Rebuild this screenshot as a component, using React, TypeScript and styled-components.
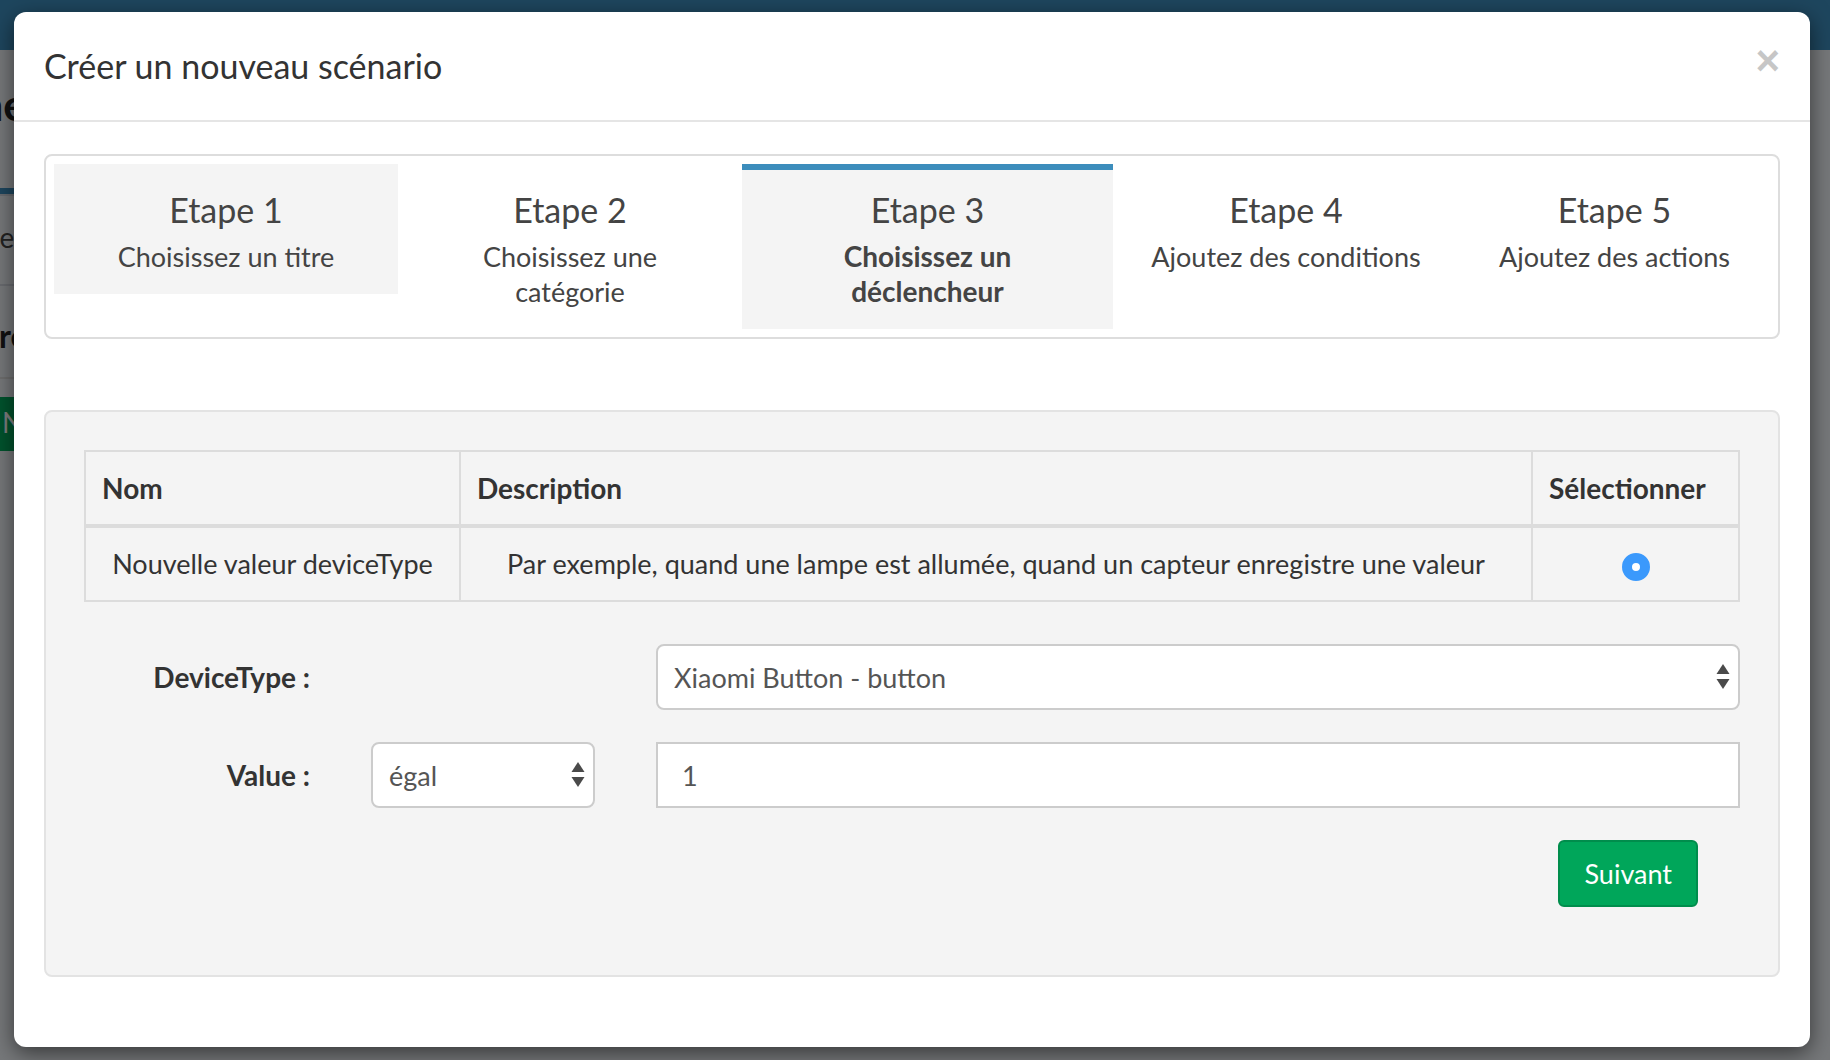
import styled, { createGlobalStyle } from "styled-components"

const GlobalStyle = createGlobalStyle`
    html, body {
        margin: 0;
        padding: 0;
    }
    body {
        width: 1830px;
        height: 1060px;
        overflow: hidden;
        font-family: "Source Sans Pro", Lato, "Open Sans", sans-serif;
        background: #ecf0f5;
        color: #333;
    }
    * {
        box-sizing: border-box;
    }
`

const steps = [
    { title: "Etape 1", text: ["Choisissez un titre"], done: true },
    { title: "Etape 2", text: ["Choisissez une", "catégorie"] },
    { title: "Etape 3", text: ["Choisissez un", "déclencheur"], active: true },
    { title: "Etape 4", text: ["Ajoutez des conditions"] },
    { title: "Etape 5", text: ["Ajoutez des actions"] },
]

const SelectArrows = () => (
    <Arrows width="14" height="26" viewBox="0 0 14 26">
        <path d="M7 0 L13.5 10 L0.5 10 Z" fill="#4a4a4a" />
        <path d="M0.5 15 L13.5 15 L7 25 Z" fill="#4a4a4a" />
    </Arrows>
)

const App = () => {
    return (
        <Page>
            <GlobalStyle />
            <TopBar />
            <PageContent>
                <PageHeading>Scène</PageHeading>
                <PageTabs>
                    <PageTab>Mes</PageTab>
                </PageTabs>
                <PageRowBold>Titre</PageRowBold>
                <PageButton>Nouveau</PageButton>
            </PageContent>

            <Backdrop />

            <Modal>
                <ModalHeader>
                    <ModalTitle>Créer un nouveau scénario</ModalTitle>
                    <CloseButton>×</CloseButton>
                </ModalHeader>

                <ModalBody>
                    <Steps>
                        {steps.map((step) => (
                            <Step key={step.title} $shaded={step.done || step.active} $active={step.active}>
                                <StepTitle>{step.title}</StepTitle>
                                <StepText $active={step.active}>
                                    {step.text.map((line, i) => (
                                        <span key={line}>
                                            {i > 0 && <br />}
                                            {line}
                                        </span>
                                    ))}
                                </StepText>
                            </Step>
                        ))}
                    </Steps>

                    <Well>
                        <Table>
                            <thead>
                                <tr>
                                    <Th $width={375}>Nom</Th>
                                    <Th>Description</Th>
                                    <Th $width={207}>Sélectionner</Th>
                                </tr>
                            </thead>
                            <tbody>
                                <tr>
                                    <Td>Nouvelle valeur deviceType</Td>
                                    <Td>Par exemple, quand une lampe est allumée, quand un capteur enregistre une valeur</Td>
                                    <Td>
                                        <Radio type="radio" name="trigger" defaultChecked />
                                    </Td>
                                </tr>
                            </tbody>
                        </Table>

                        <FormRow>
                            <Label>DeviceType :</Label>
                            <SelectBox $wide>
                                <Select defaultValue="xiaomi">
                                    <option value="xiaomi">Xiaomi Button - button</option>
                                </Select>
                                <SelectArrows />
                            </SelectBox>
                        </FormRow>

                        <FormRow>
                            <Label>Value :</Label>
                            <SelectBox>
                                <Select defaultValue="eq">
                                    <option value="eq">égal</option>
                                </Select>
                                <SelectArrows />
                            </SelectBox>
                            <Input defaultValue="1" />
                        </FormRow>

                        <ButtonRow>
                            <NextButton>Suivant</NextButton>
                        </ButtonRow>
                    </Well>
                </ModalBody>
            </Modal>
        </Page>
    )
}

const Page = styled.div`
    position: relative;
    width: 1830px;
    height: 1060px;
    overflow: hidden;
    background: #ecf0f5;
`

const TopBar = styled.header`
    height: 50px;
    background: #3c8dbc;
`

const PageContent = styled.main`
    display: flex;
    flex-direction: column;
    width: 600px;
`

const PageHeading = styled.h1`
    margin: 24px 0 0 -90px;
    font-size: 44px;
    line-height: 60px;
    font-weight: 700;
    color: #222;
`

const PageTabs = styled.div`
    margin-top: 60px;
    border-top: 2px solid #d2d6de;
    border-bottom: 2px solid #d2d6de;
    padding-top: 30px;
`

const PageTab = styled.div`
    border-top: 6px solid #3c8dbc;
    margin-top: -38px;
    padding: 26px 0 30px 0;
    text-indent: -26px;
    font-size: 28px;
    color: #444;
`

const PageRowBold = styled.div`
    padding: 30px 0 22px;
    text-indent: -40px;
    font-size: 32px;
    font-weight: 700;
    color: #222;
    border-bottom: 2px solid #dcdcdc;
`

const PageButton = styled.div`
    margin-top: 18px;
    width: 280px;
    height: 54px;
    padding: 8px 0 0 2px;
    background: #00a65a;
    color: #fff;
    font-size: 28px;
`

const Backdrop = styled.div`
    position: absolute;
    inset: 0;
    background: rgba(0, 0, 0, 0.5);
`

const Modal = styled.div`
    position: absolute;
    top: 12px;
    left: 14px;
    width: 1796px;
    background: #fff;
    border-radius: 12px;
    box-shadow: 0 6px 22px rgba(0, 0, 0, 0.55);
`

const ModalHeader = styled.div`
    display: flex;
    align-items: flex-start;
    justify-content: space-between;
    padding: 30px;
    border-bottom: 2px solid #e5e5e5;
`

const ModalTitle = styled.h4`
    margin: 0;
    font-size: 34px;
    line-height: 48px;
    font-weight: 400;
    color: #333;
`

const CloseButton = styled.button`
    margin-top: -2px;
    padding: 0;
    border: 0;
    background: none;
    font-family: "Liberation Sans", Arial, sans-serif;
    font-size: 42px;
    font-weight: 700;
    line-height: 1;
    color: #000;
    opacity: 0.22;
    cursor: pointer;
`

const ModalBody = styled.div`
    padding: 32px 30px 30px;
`

const Steps = styled.ul`
    display: grid;
    grid-template-columns: 344px 344px 371px 346px 1fr;
    align-items: start;
    margin: 0 0 71px;
    padding: 8px;
    list-style: none;
    border: 2px solid #ddd;
    border-radius: 8px;
`

const Step = styled.li<{ $shaded?: boolean; $active?: boolean }>`
    padding: 26px 10px 20px;
    text-align: center;
    color: #444;
    background: ${(p) => (p.$shaded ? "#f4f4f4" : "transparent")};
    box-shadow: ${(p) => (p.$active ? "inset 0 6px 0 #3c8dbc" : "none")};
`

const StepTitle = styled.h4`
    margin: 0 0 9px;
    font-size: 34px;
    line-height: 40px;
    font-weight: 400;
`

const StepText = styled.p<{ $active?: boolean }>`
    margin: 0;
    font-size: ${(p) => (p.$active ? 28 : 27)}px;
    line-height: 35px;
    font-weight: ${(p) => (p.$active ? 700 : 400)};
`

const Well = styled.div`
    margin-bottom: 40px;
    padding: 38px;
    background: #f4f4f4;
    border: 2px solid #e3e3e3;
    border-radius: 8px;
`

const Table = styled.table`
    width: 100%;
    border-collapse: collapse;
    margin-bottom: 42px;
    font-size: 27px;
    color: #333;
`

const Th = styled.th<{ $width?: number }>`
    width: ${(p) => (p.$width ? `${p.$width}px` : "auto")};
    padding: 16px;
    line-height: 40px;
    text-align: left;
    font-size: 28px;
    font-weight: 700;
    border: 2px solid #dcdcdc;
    border-bottom-width: 4px;
`

const Td = styled.td`
    padding: 16px;
    line-height: 40px;
    text-align: center;
    border: 2px solid #dcdcdc;
    vertical-align: middle;
`

const Radio = styled.input`
    appearance: none;
    display: inline-block;
    width: 28px;
    height: 28px;
    margin: 0;
    vertical-align: middle;
    border-radius: 50%;
    border: 10px solid #3b99fc;
    background: #fff;
`

const FormRow = styled.div`
    display: grid;
    grid-template-columns: 226px 224px 1fr;
    column-gap: 61px;
    align-items: center;
    margin-bottom: 32px;
`

const Label = styled.label`
    text-align: right;
    font-size: 28px;
    font-weight: 700;
    color: #333;
`

const SelectBox = styled.div<{ $wide?: boolean }>`
    position: relative;
    grid-column: ${(p) => (p.$wide ? "3" : "auto")};
`

const Select = styled.select`
    display: block;
    width: 100%;
    height: 66px;
    padding: 0 40px 0 16px;
    appearance: none;
    font-family: inherit;
    font-size: 27px;
    color: #555;
    background: #fff;
    border: 2px solid #ccc;
    border-radius: 8px;
    outline: none;
`

const Arrows = styled.svg`
    position: absolute;
    right: 10px;
    top: 50%;
    transform: translateY(-50%);
    pointer-events: none;
`

const Input = styled.input`
    display: block;
    width: 100%;
    height: 66px;
    padding: 0 24px;
    font-family: inherit;
    font-size: 27px;
    color: #555;
    background: #fff;
    border: 2px solid #ccc;
    border-radius: 0;
    outline: none;
`

const ButtonRow = styled.div`
    display: flex;
    justify-content: flex-end;
    padding-right: 42px;
    margin-bottom: 30px;
`

const NextButton = styled.button`
    height: 67px;
    padding: 0 24px;
    font-family: inherit;
    font-size: 27px;
    color: #fff;
    background: #00a65a;
    border: 2px solid #008d4c;
    border-radius: 6px;
    cursor: pointer;
`

export default App
